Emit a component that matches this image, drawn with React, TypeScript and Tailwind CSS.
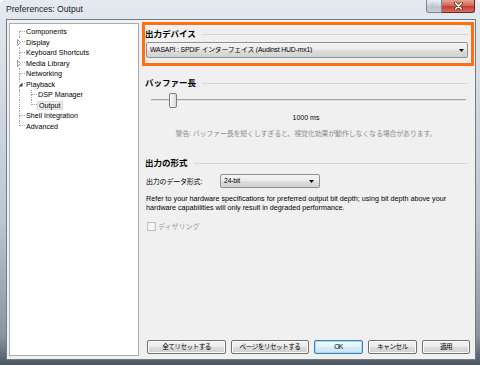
import { Fragment } from 'react'

const ui = "font-['Liberation_Sans','Noto_Sans_CJK_JP',sans-serif]"

type TreeNode = {
    label: string
    level: 1 | 2
    top: boolean
    bottom: boolean
    glyph?: 'closed' | 'open'
    selected?: boolean
}

const tree: TreeNode[] = [
    { label: 'Components', level: 1, top: false, bottom: true },
    { label: 'Display', level: 1, top: true, bottom: true, glyph: 'closed' },
    { label: 'Keyboard Shortcuts', level: 1, top: true, bottom: true },
    { label: 'Media Library', level: 1, top: true, bottom: true, glyph: 'closed' },
    { label: 'Networking', level: 1, top: true, bottom: true },
    { label: 'Playback', level: 1, top: true, bottom: true, glyph: 'open' },
    { label: 'DSP Manager', level: 2, top: true, bottom: true },
    { label: 'Output', level: 2, top: true, bottom: false, selected: true },
    { label: 'Shell Integration', level: 1, top: true, bottom: true },
    { label: 'Advanced', level: 1, top: true, bottom: false },
]

const buttons = [
    { label: '全てリセットする', width: 'w-[79px]' },
    { label: 'ページをリセットする', width: 'w-[78px]' },
    { label: 'OK', width: 'w-[49px]', primary: true },
    { label: 'キャンセル', width: 'w-[49px]' },
    { label: '適用', width: 'w-[48px]' },
]

function Connector({ top, bottom, glyph }: { top: boolean; bottom: boolean; glyph?: 'closed' | 'open' }) {
    return (
        <div className="relative flex h-full w-[6px] shrink-0 flex-col">
            <div className={top ? 'h-1/2 border-b border-l border-dotted border-[#a3a3a3]' : 'h-1/2 border-b border-dotted border-[#a3a3a3]'} />
            <div className={bottom ? 'h-1/2 border-l border-dotted border-[#a3a3a3]' : 'h-1/2'} />
            {glyph === 'closed' && (
                <svg className="absolute left-[-2px] top-[2px] bg-white" width="4" height="7" viewBox="0 0 4 7">
                    <path d="M0.5 0.5 L3.5 3.5 L0.5 6.5 Z" fill="white" stroke="#8a8a8a" strokeWidth="0.9" />
                </svg>
            )}
            {glyph === 'open' && (
                <svg className="absolute left-[-1px] top-[3px] bg-white" width="5" height="5" viewBox="0 0 5 5">
                    <path d="M4.5 0.5 L4.5 4.5 L0.5 4.5 Z" fill="#3a3a3a" />
                </svg>
            )}
        </div>
    )
}

function Heading({ children }: { children: string }) {
    return (
        <div className="flex h-[10px] items-center">
            <span className="text-[8.5px] leading-none font-bold text-black">{children}</span>
            <div className="ml-[6px] h-px flex-1 bg-[#d5d5d5]" />
        </div>
    )
}

function Combo({ label, className }: { label: string; className: string }) {
    return (
        <div
            className={`${className} flex items-center rounded-[2px] border border-[#8e8f8f] bg-[linear-gradient(#f4f4f4,#ebebeb_48%,#dedede_52%,#d2d2d2)] pl-[3px] pr-[3px]`}
        >
            <span className="flex-1 truncate text-[6.8px] leading-none tracking-[-0.15px] text-black">{label}</span>
            <svg width="5" height="3" viewBox="0 0 5 3">
                <path d="M0 0 H5 L2.5 3 Z" fill="#111" />
            </svg>
        </div>
    )
}

export default function App() {
    return (
        <div
            className={`${ui} flex h-[365px] w-[480px] flex-col overflow-hidden rounded-t-[5px] bg-[linear-gradient(180deg,#e4eaf0_0%,#d2dbe4_25%,#bcc7d2_60%,#8a95a0_92%,#4c5660_100%)]`}
        >
            {/* Title bar */}
            <div className="flex h-[19px] shrink-0 items-start">
                <span className="ml-[6px] mt-[5px] text-[8.6px] leading-none text-[#1b1b1b]">Preferences: Output</span>
                <div className="ml-auto mr-[5px] flex">
                    <div className="flex h-[13px] w-[16px] items-center justify-center rounded-bl-[3px] border border-t-0 border-[#7d8894] bg-[linear-gradient(#e9eef3,#c9d2db_50%,#b9c4cf_50%,#c6d0da)]">
                        <span className="text-[9px] leading-none font-bold text-[#f4f6f8] [text-shadow:0_0_1px_#4a5560]">?</span>
                    </div>
                    <div className="flex h-[13px] w-[33px] items-center justify-center rounded-br-[3px] border border-t-0 border-l-0 border-[#6d2a24] bg-[linear-gradient(#e7a597,#d2685a_45%,#c2402f_55%,#d6705d)]">
                        <svg width="9" height="8" viewBox="0 0 9 8">
                            <path d="M1.5 1.2 L7.5 6.8 M7.5 1.2 L1.5 6.8" stroke="#5a1a14" strokeWidth="3" strokeLinecap="round" />
                            <path d="M1.5 1.2 L7.5 6.8 M7.5 1.2 L1.5 6.8" stroke="#ffffff" strokeWidth="1.6" strokeLinecap="round" />
                        </svg>
                    </div>
                </div>
            </div>

            {/* Client area */}
            <div className="ml-[6px] flex h-[341px] w-[470px] shrink-0 border border-[#6f7b87] bg-[#f0f0f0]">
                {/* Tree */}
                <div className="ml-[2px] mt-[3px] h-[333px] w-[130px] shrink-0 border border-[#a9abb0] bg-white pt-[2.5px]">
                    {tree.map((node) => (
                        <div key={node.label} className="flex h-[10.5px] items-stretch pl-[9px]">
                            {node.level === 2 ? (
                                <Fragment>
                                    <div className="h-full w-[12px] shrink-0 border-l border-dotted border-[#a3a3a3]" />
                                    <Connector top={node.top} bottom={node.bottom} />
                                </Fragment>
                            ) : (
                                <Connector top={node.top} bottom={node.bottom} glyph={node.glyph} />
                            )}
                            <div className="flex items-center">
                                <span
                                    className={
                                        node.selected
                                            ? 'rounded-[1px] border border-[#d9d9d9] bg-[#ececec] px-[1px] text-[7.2px] leading-[7px] text-black'
                                            : 'ml-[1px] text-[7.2px] leading-none text-black'
                                    }
                                >
                                    {node.label}
                                </span>
                            </div>
                        </div>
                    ))}
                </div>

                {/* Page */}
                <div className="ml-[3px] mt-[2px] flex h-[336px] w-[332px] shrink-0 flex-col">
                    {/* Output device (highlighted) */}
                    <div className="flex h-[44px] shrink-0 flex-col border-[3px] border-[#ff6f0f] pr-[3px]">
                        <div className="mt-[4px]">
                            <Heading>出力デバイス</Heading>
                        </div>
                        <Combo
                            label="WASAPI : SPDIF インターフェイス (Audinst HUD-mx1)"
                            className="ml-[1px] mt-[3px] h-[16px]"
                        />
                    </div>

                    {/* Buffer length */}
                    <div className="mt-[12px] pl-[3px] pr-[6px]">
                        <Heading>バッファー長</Heading>
                    </div>
                    <div className="relative ml-[9px] mt-[5px] flex h-[15px] w-[315px] shrink-0 items-center">
                        <div className="absolute left-0 right-0 top-[6px] h-[3px] border-t border-b border-t-[#a7a7a7] border-b-[#f7f7f7] bg-[#dcdcdc]" />
                        <div className="relative ml-[18px] h-[15px] w-[8px] rounded-[2px] border border-[#7e7e7e] bg-[linear-gradient(90deg,#fbfbfb,#e8e8e8_60%,#d6d6d6)]" />
                    </div>
                    <div className="mt-[4.5px] flex h-[9px] items-center justify-center pr-[4px]">
                        <span className="text-[7px] leading-none text-black">1000 ms</span>
                    </div>
                    <div className="mt-[7px] flex h-[9px] items-center justify-center pr-[4px]">
                        <span className="text-[7px] leading-none tracking-[-0.2px] text-[#8e8e8e]">
                            警告: バッファー長を短くしすぎると、視覚化効果が動作しなくなる場合があります。
                        </span>
                    </div>

                    {/* Output format */}
                    <div className="mt-[20.5px] pl-[3px] pr-[6px]">
                        <Heading>出力の形式</Heading>
                    </div>
                    <div className="ml-[4px] mt-[6px] flex h-[14px] items-center">
                        <span className="w-[74px] text-[7px] leading-none tracking-[-0.2px] text-black">出力のデータ形式:</span>
                        <Combo label="24-bit" className="h-[14px] w-[100px] pr-[5px]" />
                    </div>
                    <p className="ml-[4px] mt-[6px] w-[320px] text-[7.2px] leading-[9px] text-black">
                        Refer to your hardware specifications for preferred output bit depth; using bit depth above your
                        hardware capabilities will only result in degraded performance.
                    </p>
                    <div className="ml-[5px] mt-[9.5px] flex h-[9px] items-center gap-[2px]">
                        <div className="h-[9px] w-[9px] border border-[#c0c0c0] bg-[#f4f4f4]" />
                        <span className="text-[7px] leading-none text-[#9a9a9a]">ディザリング</span>
                    </div>

                    {/* Dialog buttons */}
                    <div className="mb-[4px] ml-[5px] mt-auto flex h-[14px] gap-[5px]">
                        {buttons.map((b) => (
                            <div
                                key={b.label}
                                className={
                                    b.primary
                                        ? `${b.width} flex items-center justify-center rounded-[2px] border border-[#3c7fb1] bg-[linear-gradient(#f2f9fe,#e3f3fd_50%,#d2ecfc_50%,#c8e6f9)] shadow-[inset_0_0_0_1px_#a8d8f3]`
                                        : `${b.width} flex items-center justify-center rounded-[2px] border border-[#707070] bg-[linear-gradient(#f2f2f2,#ebebeb_50%,#dddddd_50%,#cfcfcf)] shadow-[inset_0_0_0_1px_#fbfbfb]`
                                }
                            >
                                <span className="text-[6.6px] leading-none tracking-[-0.5px] text-black">{b.label}</span>
                            </div>
                        ))}
                    </div>
                </div>
            </div>
        </div>
    )
}
